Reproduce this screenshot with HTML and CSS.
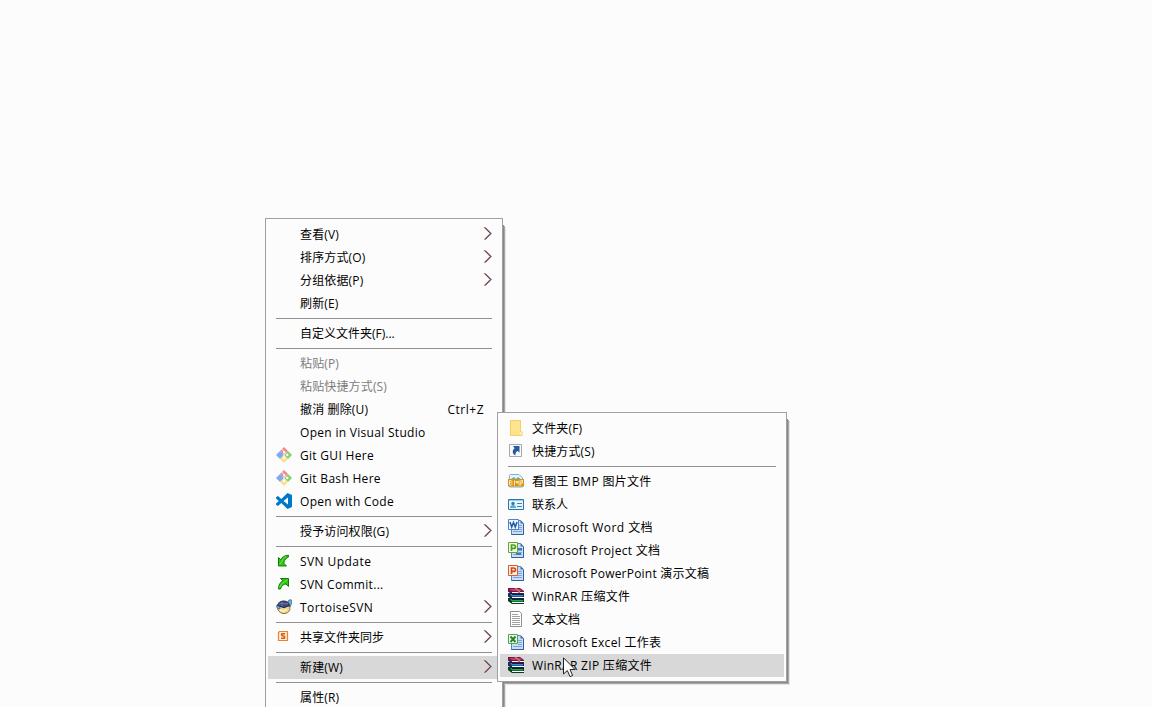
FILE: index.html
```html
<!DOCTYPE html>
<html lang="zh-CN">
<head>
<meta charset="utf-8">
<title>新建</title>
<link rel="stylesheet" href="styles.css">
</head>
<body>
<svg class="defs" aria-hidden="true">
  <defs>
    <symbol id="chev" viewBox="0 0 10 14"><g fill="none"><path d="M.8 1.300 7 7.500 .8 13.700" stroke="#f0a050" stroke-width=".8"/><path d="M2.400 1.300 8.600 7.500 2.400 13.700" stroke="#4090e0" stroke-width=".8"/><path d="M1.600 1.300 7.800 7.500 1.600 13.700" stroke="#5c0c1c"/></g></symbol>
    <symbol id="git" viewBox="0 0 16 16"><path d="M8 0 12 4 8 8 4 4Z" fill="#f5868a"/><path d="M4 4 8.300 8 4 12 0 8Z" fill="#7eaaf5"/><path d="M12 4 16 8 12 12 8 8Z" fill="#84cf68"/><path d="M8 8 12 12 8 16 4 12Z" fill="#fbe08a"/><path d="M5.700 2 8 4.500v7M8.300 5l3 3" fill="none" stroke="#fff" stroke-width=".9"/><circle cx="8.200" cy="5" r="1.100" fill="#fff"/><circle cx="11.300" cy="8" r="1.200" fill="#fff"/><circle cx="8.200" cy="11.200" r="1.100" fill="#fff"/></symbol>
    <symbol id="code" viewBox="0 0 16 16"><path fill="#0078c8" fill-rule="evenodd" d="M11.500 0 16 2V14L11.500 16 5.300 10 2 12.900 0 11.800V10.600L2.800 8 0 5.400V4.200L2 3.100 5.300 6ZM12 4.500 7.500 8 12 11.500Z"/></symbol>
    <symbol id="down" viewBox="0 0 16 16"><path d="M2.500 4.500v8.500H10.500L8 10.500C8 8 9 5.800 12.500 4V2.300C8.500 2.300 6 4.200 4.700 6.700Z" fill="#2fc414" stroke="#147c08"/><path d="M3.500 11.500 6 8.500C6.500 6 8 4.300 10 3.500" fill="none" stroke="#77e85a"/></symbol>
    <symbol id="up" viewBox="0 0 16 16"><path d="M4.500 2.500H12.500V10.500L10 8C7.500 8 5.500 9.800 4.500 13H2.500C2.500 9 4.200 6.200 6.800 4.800Z" fill="#2fc414" stroke="#147c08"/><path d="M11.500 3.600 8.500 6C5.700 7 4 9.500 3.700 11.500" fill="none" stroke="#77e85a"/></symbol>
    <symbol id="tortoise" viewBox="0 0 16 16"><path d="M1.800 7h12v3.500c-1 3-3 4-5.800 4s-5-1.500-6.200-4Z" fill="#ecd58c" stroke="#8e7133"/><path d="M.5 6.500 4 5.500 4 10 1 9ZM12 5 12 2 13.500 .8 15.800 1v3L14 8Z" fill="#78b0cd" stroke="#315e81" stroke-width=".7"/><path d="M1.500 6.500C2 4 4.500 1.800 8 2s5 2 5.500 4.500L8 8.700Z" fill="#3d4680" stroke="#252c52"/><path d="M3 5.500 6 3.700 9 5 12 4.500M6 3.700V7" fill="none" stroke="#7d89b9" stroke-width=".8"/><path d="M4 10.500 7 12.500 11 10.500" fill="none" stroke="#fff0b5" stroke-width="1.700"/></symbol>
    <symbol id="share" viewBox="0 0 16 16"><path d="M2.500 3.500 3.500 2.500H11.500V11.500H2.500Z" fill="#fff0dc" stroke="#e8842c" stroke-width="1.200"/><path d="M9.200 4.700H5.800q-.8 1.800 1 2.100l1 .3q1.500.7.600 2.200H5" fill="none" stroke="#d85a10" stroke-width="1.600"/></symbol>
    <symbol id="folder" viewBox="0 0 16 16"><path d="M2 0h11v11.500h1.500v4H2Z" fill="#ffe48e"/><path d="M2.500 .5h10v11.500h1.500v3.500H2.500Z" fill="none" stroke="#f2cf69"/><path d="M12 12h1.500v3H12Z" fill="#fff2bd"/></symbol>
    <symbol id="shortcut" viewBox="0 0 16 16"><path d="M1.500 1.500h12v12h-12Z" fill="#f8fafd" stroke="#a8a8a8"/><path d="M5 3h6.500v6.500L9.500 8C8 9 7.200 10.300 7.400 12.500 4 10.800 4 7.500 6.700 5.300Z" fill="#245aa0"/></symbol>
    <symbol id="bmp" viewBox="0 0 16 16"><path d="M1.500 6V2.500q0-1 1-1H11l3.500 3.500v9h-13Z" fill="#e5f5fb" stroke="#73b6d5"/><path d="M3 6 6 4l2 2 2-2 4 3" fill="#5dabc5"/><path d="M0 6h16v7.500H0Z" fill="#d89410"/><path d="M1.500 7.500V12M1.500 7.500h2M1.500 9.500h2M1.500 12h2M4 8v1M4 10v1.500M6.500 12.500v-5M7.500 8.500h1v1.500h1v-1.500h1M11 7.500v5M12.800 12.500v-5h1.700v2.500h-1.700" fill="none" stroke="#fff4d5" stroke-width=".9"/></symbol>
    <symbol id="contact" viewBox="0 0 16 16"><path d="M.5 3.500h15v10H.5Z" fill="#e8f5fc" stroke="#2878b0"/><path d="M1 4.500h14" stroke="#9dcce7"/><circle cx="5" cy="7.500" r="1.700" fill="#367daf"/><path d="M2 12q0-3 3-3t3 3Z" fill="#62a8d0"/><path d="M9 7.500h5M9 10.500h5" stroke="#4385b2"/></symbol>
    <symbol id="page" viewBox="0 0 16 16"><path d="M3.500 1.500h9L15.500 4.500v11h-12Z" fill="#c9dff6" stroke="#5484c0"/><path d="M12.500 1v3.500H16Z" fill="#476f9f"/><path d="M10 6.500h4M10 8.500h4M10 10.500h4M5 12.500h9" stroke="#7ca4da"/><path d="M3.500 15.500h12V5" fill="none" stroke="#2f609f"/></symbol>
    <symbol id="word" viewBox="0 0 16 16"><use href="#page"/><path d="M.5 .5h10v10H.5Z" fill="#edf5ff" stroke="#5183c4"/><path d="M2 3 3.700 8 5.500 3.500 7.300 8 9 3" fill="none" stroke="#2259a6" stroke-width="1.500"/></symbol>
    <symbol id="project" viewBox="0 0 16 16"><use href="#page"/><path d="M10 6h4v2h-4zM8 11h5v2H8Z" fill="#407bad"/><path d="M.5 .5h9v10h-9Z" fill="#f2fce9" stroke="#65a72d"/><path d="M3.500 9V3h2q2 0 2 1.700t-2 1.700h-2" fill="none" stroke="#4b9c20" stroke-width="1.700"/></symbol>
    <symbol id="ppt" viewBox="0 0 16 16"><use href="#page"/><path d="M.5 .5h9v10h-9Z" fill="#fff2e8" stroke="#d95c2c"/><path d="M3.500 9V3h2q2 0 2 1.700t-2 1.700h-2" fill="none" stroke="#cf4819" stroke-width="1.700"/></symbol>
    <symbol id="excel" viewBox="0 0 16 16"><use href="#page"/><path d="M.5 .5h9v9h-9Z" fill="#edf8e9" stroke="#55a34c"/><path d="M2.500 2.500 7.500 8M7.500 2.500 2.500 8" stroke="#268232" stroke-width="1.900"/></symbol>
    <symbol id="rar" viewBox="0 0 16 16"><path d="M0 0H12L16 3V6H4L0 3Z" fill="#7c1440"/><path d="M1 1H12L14 3H4Z" fill="#c03878"/><path d="M4 4H16V5H4Z" fill="#fff"/><path d="M0 5H4V6H16V11H4L0 8Z" fill="#182c68"/><path d="M2 6H4V7H15V8.500H4Z" fill="#3088e0"/><path d="M4 9H16V10H4Z" fill="#fff"/><path d="M0 10H4V11H16V16H4L0 13Z" fill="#083c20"/><path d="M2 11H4V12H15V13.500H4Z" fill="#20a850"/><path d="M4 14H16V15H4Z" fill="#fff"/><path d="M0 3 4 6H16M0 8 4 11H16" fill="none" stroke="#141018" stroke-width=".8"/><path d="M6 0H8.500L12 3V5H10V3Z" fill="#b8806c"/></symbol>
    <symbol id="text" viewBox="0 0 16 16"><path d="M2.500 .5h9l2 2v13h-11Z" fill="#fff" stroke="#8e8e8e"/><path d="M4 3.500h6M4 5.500h8M4 7.500h8M4 9.500h8M4 11.500h8M4 13.500h8" stroke="#a0a0a0"/></symbol>
  </defs>
</svg>

<ul class="menu main">
  <li class="item"><span class="label">查看(V)</span><svg class="arrow"><use href="#chev"/></svg></li>
  <li class="item"><span class="label">排序方式(O)</span><svg class="arrow"><use href="#chev"/></svg></li>
  <li class="item"><span class="label">分组依据(P)</span><svg class="arrow"><use href="#chev"/></svg></li>
  <li class="item"><span class="label">刷新(E)</span></li>
  <li class="sep"></li>
  <li class="item"><span class="label plain">自定义文件夹(F)...</span></li>
  <li class="sep"></li>
  <li class="item off"><span class="label">粘贴(P)</span></li>
  <li class="item off"><span class="label">粘贴快捷方式(S)</span></li>
  <li class="item"><span class="label">撤消 删除(U)</span><span class="key">Ctrl+Z</span></li>
  <li class="item"><span class="label latin">Open in Visual Studio</span></li>
  <li class="item"><svg class="icon"><use href="#git"/></svg><span class="label latin">Git GUI Here</span></li>
  <li class="item"><svg class="icon"><use href="#git"/></svg><span class="label latin">Git Bash Here</span></li>
  <li class="item"><svg class="icon"><use href="#code"/></svg><span class="label latin">Open with Code</span></li>
  <li class="sep"></li>
  <li class="item"><span class="label">授予访问权限(G)</span><svg class="arrow"><use href="#chev"/></svg></li>
  <li class="sep"></li>
  <li class="item"><svg class="icon"><use href="#down"/></svg><span class="label wide">SVN Update</span></li>
  <li class="item"><svg class="icon"><use href="#up"/></svg><span class="label latin">SVN Commit...</span></li>
  <li class="item"><svg class="icon"><use href="#tortoise"/></svg><span class="label wide">TortoiseSVN</span><svg class="arrow"><use href="#chev"/></svg></li>
  <li class="sep"></li>
  <li class="item"><svg class="icon"><use href="#share"/></svg><span class="label plain">共享文件夹同步</span><svg class="arrow"><use href="#chev"/></svg></li>
  <li class="sep"></li>
  <li class="item active"><span class="label">新建(W)</span><svg class="arrow"><use href="#chev"/></svg></li>
  <li class="sep"></li>
  <li class="item"><span class="label">属性(R)</span></li>
</ul>

<ul class="menu sub">
  <li class="item"><svg class="icon"><use href="#folder"/></svg><span class="label">文件夹(F)</span></li>
  <li class="item"><svg class="icon"><use href="#shortcut"/></svg><span class="label">快捷方式(S)</span></li>
  <li class="sep"></li>
  <li class="item"><svg class="icon"><use href="#bmp"/></svg><span class="label latin">看图王 BMP 图片文件</span></li>
  <li class="item"><svg class="icon"><use href="#contact"/></svg><span class="label plain">联系人</span></li>
  <li class="item"><svg class="icon"><use href="#word"/></svg><span class="label wide">Microsoft Word 文档</span></li>
  <li class="item"><svg class="icon"><use href="#project"/></svg><span class="label latin">Microsoft Project 文档</span></li>
  <li class="item"><svg class="icon"><use href="#ppt"/></svg><span class="label snug">Microsoft PowerPoint 演示文稿</span></li>
  <li class="item"><svg class="icon"><use href="#rar"/></svg><span class="label latin">WinRAR 压缩文件</span></li>
  <li class="item"><svg class="icon"><use href="#text"/></svg><span class="label plain">文本文档</span></li>
  <li class="item"><svg class="icon"><use href="#excel"/></svg><span class="label latin">Microsoft Excel 工作表</span></li>
  <li class="item active"><svg class="icon"><use href="#rar"/></svg><span class="label latin">WinRAR ZIP 压缩文件</span></li>
</ul>

<svg class="cursor" viewBox="0 0 13 21"><path d="M.5 .8V17L4.300 13.500 7 19.600 9.600 18.500 7 12.500H12Z" fill="#fff" stroke="#222"/></svg>
</body>
</html>
```
FILE: styles.css
```css
html, body { height: 100%; }
body {
  position: relative;
  margin: 0;
  overflow: hidden;
  background: #fcfcfc;
  color: #000;
  font: 12px/23px "Open Sans", "Noto Sans CJK SC", sans-serif;
}
.defs { position: absolute; width: 0; height: 0; }
.menu {
  position: absolute;
  box-sizing: border-box;
  margin: 0;
  padding: 4px 2px;
  list-style: none;
  background: #fcfcfc;
  border: 1px solid #a0a0a0;
}
.main { left: 265px; top: 218px; width: 238px; }
.sub { left: 497px; top: 412px; width: 290px; }
.menu::after {
  content: "";
  position: absolute;
  left: 5px;
  top: 6px;
  right: -2px;
  bottom: -2px;
  border: solid #888;
  border-width: 0 1px 1px 0;
  box-shadow: 1px 1px 0 #a8a8a8, 2px 2px 0 #e4e4e4;
  pointer-events: none;
}
.item {
  display: flex;
  align-items: center;
  height: 23px;
  padding: 0 7px 0 32px;
  white-space: pre;
}
.icon { flex: none; width: 16px; height: 16px; margin: -1px 8px 0 -24px; }
.arrow { flex: none; width: 10px; height: 14px; margin: -3px 0 0 auto; }
.key { margin: 0 9px 0 auto; letter-spacing: .5px; }
.label { letter-spacing: .15px; }
.off { color: #7c7c7c; }
.active { background: #d8d8d8; }
.plain { letter-spacing: 0; }
.snug { letter-spacing: .22px; }
.latin { letter-spacing: .3px; }
.wide { letter-spacing: .43px; }
.sep {
  height: 1px;
  margin: 3px 8px;
  background: #909090;
}
.cursor { position: absolute; left: 563px; top: 657px; width: 13px; height: 21px; }
```
